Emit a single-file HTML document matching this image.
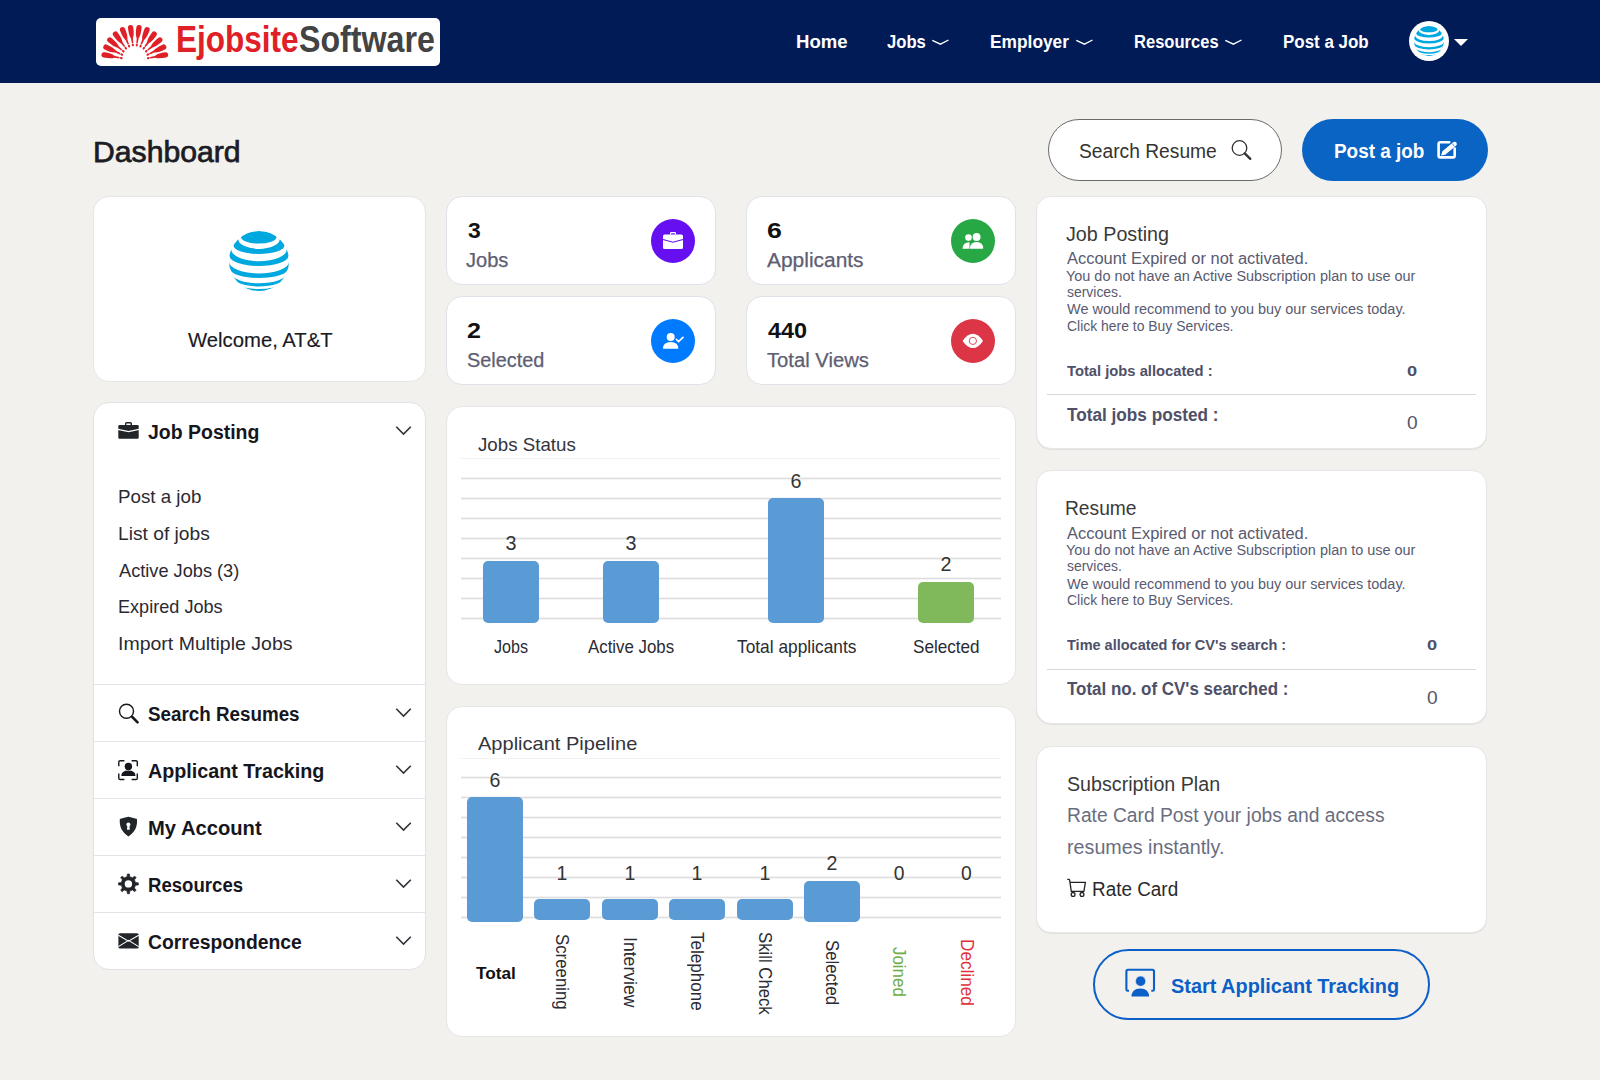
<!DOCTYPE html>
<html><head><meta charset="utf-8"><title>Dashboard</title>
<style>
*{margin:0;padding:0;box-sizing:border-box}
html,body{width:1600px;height:1080px;overflow:hidden;background:#f2f1ee;font-family:"Liberation Sans",sans-serif}
.t{position:absolute;white-space:nowrap;line-height:1}
.b{position:absolute}
.card{position:absolute;background:#fff;border:1px solid #e6e6e6;border-radius:16px}
.sc{position:absolute;background:#fff;border:1px solid #dfe2e8;border-radius:16px}
.ic{position:absolute;border-radius:50%}
.hr{position:absolute;height:1px;background:#dcdcdc}
.grid{position:absolute;height:1px;background:#dedede;box-shadow:0 1px 0 #f4f4f4,0 -1px 0 #f4f4f4}
.bar{position:absolute;background:#5b9bd5;border-radius:5px}
svg{position:absolute;overflow:visible}
</style></head>
<body>
<div class="b" style="left:0;top:0;width:1600px;height:83px;background:#011b56"></div>
<div class="b" style="left:96px;top:18px;width:344px;height:48px;background:#fff;border-radius:5px"></div>
<svg style="left:96px;top:18px" width="80" height="48" viewBox="0 0 80 48" ><g transform="translate(38.80 42.70) rotate(-10.80) translate(-1.71 0)"><path d="M17.4 -0.7 L22.2 -0.95 C25.2 -2.55 29 -2.65 33 -2.65 A2.65 2.65 0 0 1 33 2.65 C29 2.65 25.2 2.55 22.2 0.95 L17.4 0.7Z" fill="#e02027"/><ellipse cx="15.5" cy="0" rx="1.5" ry="1.05" fill="#e02027"/></g><g transform="translate(38.80 42.70) rotate(-25.20) translate(-1.09 0)"><path d="M17.4 -0.7 L22.2 -0.95 C25.2 -2.55 29 -2.65 33 -2.65 A2.65 2.65 0 0 1 33 2.65 C29 2.65 25.2 2.55 22.2 0.95 L17.4 0.7Z" fill="#e02027"/><ellipse cx="15.5" cy="0" rx="1.5" ry="1.05" fill="#e02027"/></g><g transform="translate(38.80 42.70) rotate(-39.60) translate(-0.54 0)"><path d="M17.4 -0.7 L22.2 -0.95 C25.2 -2.55 29 -2.65 33 -2.65 A2.65 2.65 0 0 1 33 2.65 C29 2.65 25.2 2.55 22.2 0.95 L17.4 0.7Z" fill="#e02027"/><ellipse cx="15.5" cy="0" rx="1.5" ry="1.05" fill="#e02027"/></g><g transform="translate(38.80 42.70) rotate(-54.00) translate(-0.10 0)"><path d="M17.4 -0.7 L22.2 -0.95 C25.2 -2.55 29 -2.65 33 -2.65 A2.65 2.65 0 0 1 33 2.65 C29 2.65 25.2 2.55 22.2 0.95 L17.4 0.7Z" fill="#e02027"/><ellipse cx="15.5" cy="0" rx="1.5" ry="1.05" fill="#e02027"/></g><g transform="translate(38.80 42.70) rotate(-68.40) translate(0.22 0)"><path d="M17.4 -0.7 L22.2 -0.95 C25.2 -2.55 29 -2.65 33 -2.65 A2.65 2.65 0 0 1 33 2.65 C29 2.65 25.2 2.55 22.2 0.95 L17.4 0.7Z" fill="#e02027"/><ellipse cx="15.5" cy="0" rx="1.5" ry="1.05" fill="#e02027"/></g><g transform="translate(38.80 42.70) rotate(-82.80) translate(0.38 0)"><path d="M17.4 -0.7 L22.2 -0.95 C25.2 -2.55 29 -2.65 33 -2.65 A2.65 2.65 0 0 1 33 2.65 C29 2.65 25.2 2.55 22.2 0.95 L17.4 0.7Z" fill="#e02027"/><ellipse cx="15.5" cy="0" rx="1.5" ry="1.05" fill="#e02027"/></g><g transform="translate(38.80 42.70) rotate(-97.20) translate(0.38 0)"><path d="M17.4 -0.7 L22.2 -0.95 C25.2 -2.55 29 -2.65 33 -2.65 A2.65 2.65 0 0 1 33 2.65 C29 2.65 25.2 2.55 22.2 0.95 L17.4 0.7Z" fill="#e02027"/><ellipse cx="15.5" cy="0" rx="1.5" ry="1.05" fill="#e02027"/></g><g transform="translate(38.80 42.70) rotate(-111.60) translate(0.22 0)"><path d="M17.4 -0.7 L22.2 -0.95 C25.2 -2.55 29 -2.65 33 -2.65 A2.65 2.65 0 0 1 33 2.65 C29 2.65 25.2 2.55 22.2 0.95 L17.4 0.7Z" fill="#e02027"/><ellipse cx="15.5" cy="0" rx="1.5" ry="1.05" fill="#e02027"/></g><g transform="translate(38.80 42.70) rotate(-126.00) translate(-0.10 0)"><path d="M17.4 -0.7 L22.2 -0.95 C25.2 -2.55 29 -2.65 33 -2.65 A2.65 2.65 0 0 1 33 2.65 C29 2.65 25.2 2.55 22.2 0.95 L17.4 0.7Z" fill="#e02027"/><ellipse cx="15.5" cy="0" rx="1.5" ry="1.05" fill="#e02027"/></g><g transform="translate(38.80 42.70) rotate(-140.40) translate(-0.54 0)"><path d="M17.4 -0.7 L22.2 -0.95 C25.2 -2.55 29 -2.65 33 -2.65 A2.65 2.65 0 0 1 33 2.65 C29 2.65 25.2 2.55 22.2 0.95 L17.4 0.7Z" fill="#e02027"/><ellipse cx="15.5" cy="0" rx="1.5" ry="1.05" fill="#e02027"/></g><g transform="translate(38.80 42.70) rotate(-154.80) translate(-1.09 0)"><path d="M17.4 -0.7 L22.2 -0.95 C25.2 -2.55 29 -2.65 33 -2.65 A2.65 2.65 0 0 1 33 2.65 C29 2.65 25.2 2.55 22.2 0.95 L17.4 0.7Z" fill="#e02027"/><ellipse cx="15.5" cy="0" rx="1.5" ry="1.05" fill="#e02027"/></g><g transform="translate(38.80 42.70) rotate(-169.20) translate(-1.71 0)"><path d="M17.4 -0.7 L22.2 -0.95 C25.2 -2.55 29 -2.65 33 -2.65 A2.65 2.65 0 0 1 33 2.65 C29 2.65 25.2 2.55 22.2 0.95 L17.4 0.7Z" fill="#e02027"/><ellipse cx="15.5" cy="0" rx="1.5" ry="1.05" fill="#e02027"/></g></svg>
<div class="t" style="left:176.25px;top:22.00px;font-size:36px;font-weight:700;color:#e02027;transform:scale(0.8759,1.0);transform-origin:0 30.00px;">Ejobsite</div>
<div class="t" style="left:299.11px;top:22.00px;font-size:36px;font-weight:700;color:#434343;transform:scale(0.8933,1.0);transform-origin:0 30.00px;">Software</div>
<div class="t" style="left:796.47px;top:33.00px;font-size:18px;font-weight:700;color:#fff;transform:scale(1.0312,1.0);transform-origin:0 15.00px;">Home</div>
<div class="t" style="left:887.08px;top:33.00px;font-size:18px;font-weight:700;color:#fff;transform:scale(0.9250,1.0);transform-origin:0 15.00px;">Jobs</div>
<div class="t" style="left:989.84px;top:33.00px;font-size:18px;font-weight:700;color:#fff;transform:scale(0.9630,1.0);transform-origin:0 15.00px;">Employer</div>
<div class="t" style="left:1133.88px;top:33.00px;font-size:18px;font-weight:700;color:#fff;transform:scale(0.9189,1.0);transform-origin:0 15.00px;">Resources</div>
<div class="t" style="left:1282.86px;top:33.00px;font-size:18px;font-weight:700;color:#fff;transform:scale(0.9416,1.0);transform-origin:0 15.00px;">Post a Job</div>
<svg style="left:932px;top:39px" width="17" height="7" viewBox="0 0 17 7" ><path d="M0.3 1.3 L8.4 5.2 L16.5 1.0" fill="none" stroke="#fff" stroke-width="1.35"/></svg>
<svg style="left:1076px;top:39px" width="17" height="7" viewBox="0 0 17 7" ><path d="M0.3 1.3 L8.4 5.2 L16.5 1.0" fill="none" stroke="#fff" stroke-width="1.35"/></svg>
<svg style="left:1225px;top:39px" width="17" height="7" viewBox="0 0 17 7" ><path d="M0.3 1.3 L8.4 5.2 L16.5 1.0" fill="none" stroke="#fff" stroke-width="1.35"/></svg>
<svg style="left:1409px;top:21px" width="40" height="40" viewBox="0 0 40 40" ><circle cx="20" cy="20" r="20" fill="#fff"/><g transform="translate(5 5) scale(0.5)"><defs><clipPath id="g1409_21"><circle cx="30" cy="30" r="30"/></clipPath></defs><g clip-path="url(#g1409_21)"><ellipse cx="29.8" cy="6.3" rx="17.6" ry="6.3" fill="#00a8e0"/><path d="M9.34 8.25 A20.66 9.65 0 0 0 50.66 8.25 L66 8.25 L66 14.3 L55.56 14.3 A25.56 8.70 0 0 1 4.44 14.3 L-6 14.3 L-6 8.25Z" fill="#00a8e0"/><path d="M2.29 18.5 A27.71 11.70 0 0 0 57.71 18.5 L66 18.5 L66 24.7 L59.53 24.7 A29.53 10.30 0 0 1 0.47 24.7 L-6 24.7 L-6 18.5Z" fill="#00a8e0"/><path d="M0.01 30.8 A29.99 11.70 0 0 0 59.99 30.8 L66 30.8 L66 37.5 L59.05 37.5 A29.05 9.50 0 0 1 0.95 37.5 L-6 37.5 L-6 30.8Z" fill="#00a8e0"/><path d="M3.01 43.1 A26.99 9.20 0 0 0 56.99 43.1 L66 43.1 L66 47.0 L54.72 47.0 A24.72 8.50 0 0 1 5.28 47.0 L-6 47.0 L-6 43.1Z" fill="#00a8e0"/><path d="M11.48 53.6 A18.52 4.50 0 0 0 48.52 53.6 L66 53.6 L66 55.0 L46.58 55.0 A16.58 5.80 0 0 1 13.42 55.0 L-6 55.0 L-6 53.6Z" fill="#00a8e0"/></g></g></svg>
<svg style="left:1454px;top:39px" width="14" height="8"><path d="M0 0H14L7 7Z" fill="#fff"/></svg>
<div class="t" style="left:92.81px;top:137.00px;font-size:30.3px;color:#1c1c24;transform:scale(0.9958,1.0);transform-origin:0 25.00px;-webkit-text-stroke:0.75px #1c1c24;">Dashboard</div>
<div class="b" style="left:1048px;top:119px;width:234px;height:62px;border:1px solid #6b6b6b;border-radius:31px;background:#fff"></div>
<div class="t" style="left:1078.54px;top:141.00px;font-size:20px;color:#35332f;transform:scale(0.9610,1.0);transform-origin:0 17.00px;">Search Resume</div>
<svg style="left:1231px;top:140px" width="22" height="22"><circle cx="8.5" cy="8" r="7.3" fill="none" stroke="#35332f" stroke-width="1.3"/><path d="M13.7 13.4 L19.3 18.9" stroke="#35332f" stroke-width="2.3" stroke-linecap="round"/></svg>
<div class="b" style="left:1302px;top:119px;width:186px;height:62px;border-radius:31px;background:#0a64c4"></div>
<div class="t" style="left:1334.05px;top:141.00px;font-size:20px;font-weight:700;color:#fff;transform:scale(0.9462,1.0);transform-origin:0 17.00px;">Post a job</div>
<svg style="left:1437px;top:141px" width="22" height="20" viewBox="0 0 22 20" ><path d="M12.2 1.3 H3.2 Q1.6 1.3 1.6 2.9 V14.8 Q1.6 16.4 3.2 16.4 H16.1 Q17.7 16.4 17.7 14.8 V7.6" fill="none" stroke="#fff" stroke-width="2.6" stroke-linecap="round"/><path d="M4.0 14.6 L5.4 10.3 L16.2 1.3 A2.15 2.15 0 0 1 19.0 4.7 L8.2 13.7Z" fill="#fff"/><path d="M15.0 2.4 L17.8 5.7" stroke="#0a64c4" stroke-width="0.7"/></svg>
<div class="card" style="left:93px;top:196px;width:333px;height:186px"></div>
<svg style="left:229px;top:231px" width="60" height="60" viewBox="0 0 60 60" ><g transform="scale(1.0)"><defs><clipPath id="g229_231"><circle cx="30" cy="30" r="30"/></clipPath></defs><g clip-path="url(#g229_231)"><ellipse cx="29.8" cy="6.3" rx="17.6" ry="6.3" fill="#00a8e0"/><path d="M9.34 8.25 A20.66 9.65 0 0 0 50.66 8.25 L66 8.25 L66 14.3 L55.56 14.3 A25.56 8.70 0 0 1 4.44 14.3 L-6 14.3 L-6 8.25Z" fill="#00a8e0"/><path d="M2.29 18.5 A27.71 11.70 0 0 0 57.71 18.5 L66 18.5 L66 24.7 L59.53 24.7 A29.53 10.30 0 0 1 0.47 24.7 L-6 24.7 L-6 18.5Z" fill="#00a8e0"/><path d="M0.01 30.8 A29.99 11.70 0 0 0 59.99 30.8 L66 30.8 L66 37.5 L59.05 37.5 A29.05 9.50 0 0 1 0.95 37.5 L-6 37.5 L-6 30.8Z" fill="#00a8e0"/><path d="M3.01 43.1 A26.99 9.20 0 0 0 56.99 43.1 L66 43.1 L66 47.0 L54.72 47.0 A24.72 8.50 0 0 1 5.28 47.0 L-6 47.0 L-6 43.1Z" fill="#00a8e0"/><path d="M11.48 53.6 A18.52 4.50 0 0 0 48.52 53.6 L66 53.6 L66 55.0 L46.58 55.0 A16.58 5.80 0 0 1 13.42 55.0 L-6 55.0 L-6 53.6Z" fill="#00a8e0"/></g></g></svg>
<div class="t" style="left:188.00px;top:330.00px;font-size:20.29px;color:#1a1a22;-webkit-text-stroke:0.15px #1a1a22;">Welcome, AT&amp;T</div>
<div class="sc" style="left:446px;top:196px;width:270px;height:89px"></div>
<div class="t" style="left:467.87px;top:220.00px;font-size:22.25px;font-weight:700;color:#111;transform:scale(1.0300,1.0);transform-origin:0 18.00px;">3</div>
<div class="t" style="left:466.19px;top:251.00px;font-size:19.78px;color:#5e5e72;transform:scale(1.0150,1.0);transform-origin:0 16.00px;-webkit-text-stroke:0.25px #5e5e72;">Jobs</div>
<div class="ic" style="left:651px;top:219px;width:44px;height:44px;background:#6610f2"></div>
<svg style="left:663px;top:231px" width="20" height="20" viewBox="0 0 20 20" ><path d="M7 2.2 Q7 1 8.2 1 H11.8 Q13 1 13 2.2 V3.6 H11.8 V2.3 H8.2 V3.6 H7Z" fill="#fff"/><rect x="0" y="3.6" width="20" height="14.4" rx="1.6" fill="#fff"/><path d="M0 8.5 L10 11.2 L20 8.5" fill="none" stroke="#6610f2" stroke-width="1.1"/></svg>
<div class="sc" style="left:746px;top:196px;width:270px;height:89px"></div>
<div class="t" style="left:766.70px;top:220.00px;font-size:22.25px;font-weight:700;color:#111;transform:scale(1.2000,1.0);transform-origin:0 18.00px;">6</div>
<div class="t" style="left:767.10px;top:251.00px;font-size:19.78px;color:#5e5e72;transform:scale(1.0589,1.0);transform-origin:0 16.00px;-webkit-text-stroke:0.25px #5e5e72;">Applicants</div>
<div class="ic" style="left:951px;top:219px;width:44px;height:44px;background:#28a745"></div>
<svg style="left:950px;top:218px" width="46" height="46" viewBox="0 0 46 46" ><circle cx="18.5" cy="19.6" r="3.3" fill="#fff"/><circle cx="26.6" cy="19" r="3.9" fill="#fff"/><path d="M12.5 30.7 Q12.5 24.2 19.5 24.2 L19.5 30.7Z" fill="#fff"/><path d="M20 30.7 Q20 24.1 26.6 24.1 Q33.2 24.1 33.2 30.7Z" fill="#fff"/></svg>
<div class="sc" style="left:446px;top:296px;width:270px;height:89px"></div>
<div class="t" style="left:467.12px;top:320.00px;font-size:22.25px;font-weight:700;color:#111;transform:scale(1.1250,1.0);transform-origin:0 18.00px;">2</div>
<div class="t" style="left:466.90px;top:351.00px;font-size:19.78px;color:#5e5e72;transform:scale(1.0047,1.0);transform-origin:0 16.00px;-webkit-text-stroke:0.25px #5e5e72;">Selected</div>
<div class="ic" style="left:651px;top:319px;width:44px;height:44px;background:#007bff"></div>
<svg style="left:650px;top:318px" width="46" height="46" viewBox="0 0 46 46" ><circle cx="20.7" cy="19" r="4" fill="#fff"/><path d="M13 30.7 Q13 24 20.7 24 Q28.3 24 28.3 30.7Z" fill="#fff"/><path d="M26.3 21.3 L28.5 23.6 L33 19.3" fill="none" stroke="#fff" stroke-width="1.6" stroke-linecap="round"/></svg>
<div class="sc" style="left:746px;top:296px;width:270px;height:89px"></div>
<div class="t" style="left:767.50px;top:320.00px;font-size:22.25px;font-weight:700;color:#111;transform:scale(1.0528,1.0);transform-origin:0 18.00px;">440</div>
<div class="t" style="left:767.10px;top:351.00px;font-size:19.78px;color:#5e5e72;transform:scale(1.0232,1.0);transform-origin:0 16.00px;-webkit-text-stroke:0.25px #5e5e72;">Total Views</div>
<div class="ic" style="left:951px;top:319px;width:44px;height:44px;background:#dc3545"></div>
<svg style="left:950px;top:318px" width="46" height="46" viewBox="0 0 46 46" ><path d="M12.6 22.9 Q17.5 15.8 22.9 15.8 Q28.3 15.8 33 22.9 Q28.3 30 22.9 30 Q17.5 30 12.6 22.9Z" fill="#fff"/><circle cx="22.9" cy="22.9" r="3.6" fill="none" stroke="#dc3545" stroke-width="0.9"/></svg>
<div class="card" style="left:1036px;top:196px;width:451px;height:253px;border-radius:15px;box-shadow:0 1px 1px rgba(0,0,0,0.07)"></div>
<div class="t" style="left:1066.01px;top:224.00px;font-size:20px;color:#3a3a3a;transform:scale(0.9853,1.0);transform-origin:0 17.00px;">Job Posting</div>
<div class="t" style="left:1067.00px;top:251.00px;font-size:16px;color:#585a70;transform:scale(1.0278,1.0);transform-origin:0 13.00px;">Account Expired or not activated.</div>
<div class="t" style="left:1066.47px;top:269.00px;font-size:14px;color:#585a70;transform:scale(1.0312,1.0);transform-origin:0 12.00px;">You do not have an Active Subscription plan to use our</div>
<div class="t" style="left:1066.81px;top:285.00px;font-size:14px;color:#585a70;transform:scale(0.9943,1.0);transform-origin:0 12.00px;">services.</div>
<div class="t" style="left:1066.80px;top:302.00px;font-size:14px;color:#585a70;transform:scale(1.0327,1.0);transform-origin:0 12.00px;">We would recommend to you buy our services today.</div>
<div class="t" style="left:1066.80px;top:319.00px;font-size:14px;color:#585a70;transform:scale(0.9952,1.0);transform-origin:0 12.00px;">Click here to Buy Services.</div>
<div class="t" style="left:1067.00px;top:363.00px;font-size:15px;font-weight:700;color:#4e5068;transform:scale(0.9830,1.0);transform-origin:0 13.00px;">Total jobs allocated :</div>
<div class="t" style="left:1406.79px;top:363.00px;font-size:15px;font-weight:700;color:#4e5068;transform:scale(1.2143,1.0);transform-origin:0 13.00px;">0</div>
<div class="hr" style="left:1047px;top:394px;width:429px;background:#d9d9d9"></div>
<div class="t" style="left:1067.00px;top:406.00px;font-size:18px;font-weight:700;color:#4e5068;transform:scale(0.9554,1.0);transform-origin:0 15.00px;">Total jobs posted :</div>
<div class="t" style="left:1407.44px;top:414.00px;font-size:18px;color:#55566a;transform:scale(1.0625,1.0);transform-origin:0 15.00px;">0</div>
<div class="card" style="left:1036px;top:470px;width:451px;height:254px;border-radius:15px;box-shadow:0 1px 1px rgba(0,0,0,0.07)"></div>
<div class="t" style="left:1065.08px;top:498.00px;font-size:20px;color:#3a3a3a;transform:scale(0.9606,1.0);transform-origin:0 17.00px;">Resume</div>
<div class="t" style="left:1067.00px;top:526.00px;font-size:16px;color:#585a70;transform:scale(1.0278,1.0);transform-origin:0 13.00px;">Account Expired or not activated.</div>
<div class="t" style="left:1066.47px;top:543.00px;font-size:14px;color:#585a70;transform:scale(1.0312,1.0);transform-origin:0 12.00px;">You do not have an Active Subscription plan to use our</div>
<div class="t" style="left:1066.81px;top:559.00px;font-size:14px;color:#585a70;transform:scale(0.9943,1.0);transform-origin:0 12.00px;">services.</div>
<div class="t" style="left:1066.80px;top:577.00px;font-size:14px;color:#585a70;transform:scale(1.0327,1.0);transform-origin:0 12.00px;">We would recommend to you buy our services today.</div>
<div class="t" style="left:1066.80px;top:593.00px;font-size:14px;color:#585a70;transform:scale(0.9952,1.0);transform-origin:0 12.00px;">Click here to Buy Services.</div>
<div class="t" style="left:1067.00px;top:637.00px;font-size:15px;font-weight:700;color:#4e5068;transform:scale(0.9668,1.0);transform-origin:0 13.00px;">Time allocated for CV&#x27;s search :</div>
<div class="t" style="left:1426.79px;top:637.00px;font-size:15px;font-weight:700;color:#4e5068;transform:scale(1.2143,1.0);transform-origin:0 13.00px;">0</div>
<div class="hr" style="left:1047px;top:669px;width:429px;background:#d9d9d9"></div>
<div class="t" style="left:1067.00px;top:680.00px;font-size:18px;font-weight:700;color:#4e5068;transform:scale(0.9421,1.0);transform-origin:0 15.00px;">Total no. of CV&#x27;s searched :</div>
<div class="t" style="left:1427.44px;top:689.00px;font-size:18px;color:#55566a;transform:scale(1.0625,1.0);transform-origin:0 15.00px;">0</div>
<div class="card" style="left:1036px;top:746px;width:451px;height:187px;border-radius:15px;box-shadow:0 1px 1px rgba(0,0,0,0.07)"></div>
<div class="t" style="left:1067.02px;top:774.00px;font-size:20px;color:#3a3a3a;transform:scale(0.9838,1.0);transform-origin:0 17.00px;">Subscription Plan</div>
<div class="t" style="left:1066.58px;top:805.00px;font-size:20px;color:#6a6d80;transform:scale(0.9618,1.0);transform-origin:0 17.00px;">Rate Card Post your jobs and access</div>
<div class="t" style="left:1067.31px;top:837.00px;font-size:20px;color:#6a6d80;transform:scale(0.9854,1.0);transform-origin:0 17.00px;">resumes instantly.</div>
<svg style="left:1066px;top:878px" width="22" height="22" viewBox="0 0 22 22" ><path d="M1.3 1.4 H2.7 Q3.5 1.4 3.7 2.3 L5.3 13.3 H17.9 L19.4 4.3 H4.2" fill="none" stroke="#222" stroke-width="1.3" stroke-linejoin="round"/><circle cx="7.1" cy="16.4" r="1.9" fill="none" stroke="#222" stroke-width="1.3"/><circle cx="16" cy="16.4" r="1.9" fill="none" stroke="#222" stroke-width="1.3"/></svg>
<div class="t" style="left:1092.41px;top:879.00px;font-size:20px;color:#2a2a2a;transform:scale(0.9455,1.0);transform-origin:0 17.00px;">Rate Card</div>
<div class="b" style="left:1093px;top:949px;width:337px;height:71px;border:2.5px solid #0b5fc6;border-radius:36px"></div>
<svg style="left:1125px;top:968px" width="32" height="31" viewBox="0 0 32 31" ><path d="M4 22.8 H2.7 Q1.4 22.8 1.4 21.5 V3.3 Q1.4 1.8 2.9 1.8 H27.4 Q29 1.8 29 3.3 V21.5 Q29 22.8 27.7 22.8 H26.3" fill="none" stroke="#0b5fc6" stroke-width="2.1"/><circle cx="15.6" cy="13.2" r="5.1" fill="#0b5fc6" stroke="#f2f1ee" stroke-width="0.6"/><path d="M5.6 29.4 Q5.6 19.6 15.3 19.6 Q25 19.6 25 29.4Z" fill="#0b5fc6" stroke="#f2f1ee" stroke-width="1.6"/></svg>
<div class="t" style="left:1171.05px;top:975.00px;font-size:21px;font-weight:700;color:#0b5fc6;transform:scale(0.9475,1.0);transform-origin:0 18.00px;">Start Applicant Tracking</div>
<div class="card" style="left:93px;top:402px;width:333px;height:568px;border-color:#e2e2e6"></div>
<svg style="left:118px;top:422px" width="21" height="18" viewBox="0 0 21 18" ><path d="M7 1.5 Q7 0 8.5 0 H12.5 Q14 0 14 1.5 V3.2 H12.6 V1.4 H8.4 V3.2 H7Z" fill="#212529"/><rect x="0.3" y="3" width="20.4" height="13.8" rx="1.3" fill="#212529"/><path d="M0 7.4 L10.5 9.6 L21 7.4" fill="none" stroke="#fff" stroke-width="1.2"/></svg>
<div class="t" style="left:148.03px;top:422.00px;font-size:20px;font-weight:700;color:#16161e;transform:scale(0.9732,1.0);transform-origin:0 17.00px;">Job Posting</div>
<svg style="left:395px;top:426px" width="17" height="10" viewBox="0 0 17 10" ><path d="M1.3 0.8 L8.5 8.0 L15.8 0.7" fill="none" stroke="#2f3237" stroke-width="1.6"/></svg>
<div class="t" style="left:117.63px;top:487.00px;font-size:19px;color:#2a2a33;transform:scale(0.9866,1.0);transform-origin:0 16.00px;">Post a job</div>
<div class="t" style="left:117.58px;top:524.00px;font-size:19px;color:#2a2a33;transform:scale(1.0102,1.0);transform-origin:0 16.00px;">List of jobs</div>
<div class="t" style="left:118.80px;top:561.00px;font-size:19px;color:#2a2a33;transform:scale(0.9573,1.0);transform-origin:0 16.00px;">Active Jobs (3)</div>
<div class="t" style="left:117.70px;top:597.00px;font-size:19px;color:#2a2a33;transform:scale(0.9523,1.0);transform-origin:0 16.00px;">Expired Jobs</div>
<div class="t" style="left:117.55px;top:634.00px;font-size:19px;color:#2a2a33;transform:scale(1.0263,1.0);transform-origin:0 16.00px;">Import Multiple Jobs</div>
<div class="hr" style="left:94px;top:684px;width:331px;background:#e3e3ea"></div>
<div class="t" style="left:148.06px;top:704.00px;font-size:20px;font-weight:700;color:#16161e;transform:scale(0.9403,1.0);transform-origin:0 17.00px;">Search Resumes</div>
<svg style="left:117px;top:701.7px" width="24" height="24" viewBox="0 0 24 24" ><circle cx="9.5" cy="9.2" r="7.0" fill="none" stroke="#16161e" stroke-width="1.4"/><path d="M15.3 15 L20.6 20.3" stroke="#16161e" stroke-width="2.5" stroke-linecap="round"/></svg>
<svg style="left:395px;top:708px" width="17" height="10" viewBox="0 0 17 10" ><path d="M1.3 0.8 L8.5 8.0 L15.8 0.7" fill="none" stroke="#2f3237" stroke-width="1.6"/></svg>
<div class="hr" style="left:94px;top:741px;width:331px;background:#e3e3ea"></div>
<div class="t" style="left:148.01px;top:761.00px;font-size:20px;font-weight:700;color:#16161e;transform:scale(0.9859,1.0);transform-origin:0 17.00px;">Applicant Tracking</div>
<svg style="left:117px;top:759px" width="24" height="24" viewBox="0 0 24 24" ><path d="M1.8 7.3 V3 Q1.8 1.7 3.1 1.7 H7.4 M14.6 1.7 H19 Q20.3 1.7 20.3 3 V7.3 M20.3 14.6 V19.2 Q20.3 20.5 19 20.5 H14.6 M7.4 20.5 H3.1 Q1.8 20.5 1.8 19.2 V14.6" fill="none" stroke="#16161e" stroke-width="1.4"/><circle cx="11.4" cy="7.4" r="3.7" fill="#16161e"/><path d="M4.3 17 Q4.3 11.5 11.4 11.5 Q18.5 11.5 18.5 17Z" fill="#16161e"/></svg>
<svg style="left:395px;top:765px" width="17" height="10" viewBox="0 0 17 10" ><path d="M1.3 0.8 L8.5 8.0 L15.8 0.7" fill="none" stroke="#2f3237" stroke-width="1.6"/></svg>
<div class="hr" style="left:94px;top:798px;width:331px;background:#e3e3ea"></div>
<div class="t" style="left:147.99px;top:818.00px;font-size:20px;font-weight:700;color:#16161e;transform:scale(1.0090,1.0);transform-origin:0 17.00px;">My Account</div>
<svg style="left:117px;top:815.3px" width="24" height="24" viewBox="0 0 24 24" ><path d="M11.4 1.8 Q15.5 2.5 20 4 Q20.5 12 16.8 16.5 Q14.5 19.5 11.4 21.5 Q8.3 19.5 6 16.5 Q2.3 12 2.8 4 Q7.3 2.5 11.4 1.8Z" fill="#212529"/><circle cx="11.4" cy="9.6" r="2" fill="#fff"/><path d="M10.4 10 H12.4 L12.8 14.8 H10Z" fill="#fff"/></svg>
<svg style="left:395px;top:822px" width="17" height="10" viewBox="0 0 17 10" ><path d="M1.3 0.8 L8.5 8.0 L15.8 0.7" fill="none" stroke="#2f3237" stroke-width="1.6"/></svg>
<div class="hr" style="left:94px;top:855px;width:331px;background:#e3e3ea"></div>
<div class="t" style="left:148.07px;top:875.00px;font-size:20px;font-weight:700;color:#16161e;transform:scale(0.9300,1.0);transform-origin:0 17.00px;">Resources</div>
<svg style="left:117px;top:872px" width="24" height="24" viewBox="0 0 24 24" ><path d="M10.01 4.73 L10.35 1.95 L12.45 1.95 L12.79 4.73 L15.48 5.85 L17.69 4.13 L19.17 5.61 L17.45 7.82 L18.57 10.51 L21.35 10.85 L21.35 12.95 L18.57 13.29 L17.45 15.98 L19.17 18.19 L17.69 19.67 L15.48 17.95 L12.79 19.07 L12.45 21.85 L10.35 21.85 L10.01 19.07 L7.32 17.95 L5.11 19.67 L3.63 18.19 L5.35 15.98 L4.23 13.29 L1.45 12.95 L1.45 10.85 L4.23 10.51 L5.35 7.82 L3.63 5.61 L5.11 4.13 L7.32 5.85Z" fill="#212529" stroke="#212529" stroke-width="0.6" stroke-linejoin="round"/><circle cx="11.4" cy="11.9" r="3.7" fill="#fff"/></svg>
<svg style="left:395px;top:879px" width="17" height="10" viewBox="0 0 17 10" ><path d="M1.3 0.8 L8.5 8.0 L15.8 0.7" fill="none" stroke="#2f3237" stroke-width="1.6"/></svg>
<div class="hr" style="left:94px;top:912px;width:331px;background:#e3e3ea"></div>
<div class="t" style="left:148.03px;top:932.00px;font-size:20px;font-weight:700;color:#16161e;transform:scale(0.9682,1.0);transform-origin:0 17.00px;">Correspondence</div>
<svg style="left:117px;top:929px" width="24" height="24" viewBox="0 0 24 24" ><rect x="1.4" y="4.2" width="20.3" height="15.3" rx="1.6" fill="#212529"/><path d="M1.4 6.2 L11.5 12.2 L21.7 6.2 M1.4 17.6 L11.5 11.3 L21.7 17.6" fill="none" stroke="#fff" stroke-width="1.1"/></svg>
<svg style="left:395px;top:936px" width="17" height="10" viewBox="0 0 17 10" ><path d="M1.3 0.8 L8.5 8.0 L15.8 0.7" fill="none" stroke="#2f3237" stroke-width="1.6"/></svg>
<div class="card" style="left:446px;top:406px;width:570px;height:279px"></div>
<div class="t" style="left:477.50px;top:435.00px;font-size:19px;color:#34343c;transform:scale(0.9848,1.0);transform-origin:0 16.00px;">Jobs Status</div>
<div class="b" style="left:461px;top:458px;width:540px;height:1px;background:#f2f2f2"></div>
<div class="grid" style="left:461px;top:478px;width:540px"></div>
<div class="grid" style="left:461px;top:498px;width:540px"></div>
<div class="grid" style="left:461px;top:518px;width:540px"></div>
<div class="grid" style="left:461px;top:538px;width:540px"></div>
<div class="grid" style="left:461px;top:558px;width:540px"></div>
<div class="grid" style="left:461px;top:578px;width:540px"></div>
<div class="grid" style="left:461px;top:598px;width:540px"></div>
<div class="grid" style="left:461px;top:618px;width:540px"></div>
<div class="bar" style="left:483px;top:561px;width:56px;height:62px;background:#5b9bd5"></div>
<div class="t" style="left:505.50px;top:534.00px;font-size:19.72px;color:#333;">3</div>
<div class="t" style="left:494.00px;top:637.00px;font-size:19px;color:#2b2b33;transform:scale(0.8500,1.0);transform-origin:0 16.00px;">Jobs</div>
<div class="bar" style="left:603px;top:561px;width:56px;height:62px;background:#5b9bd5"></div>
<div class="t" style="left:625.50px;top:534.00px;font-size:19.72px;color:#333;">3</div>
<div class="t" style="left:588.00px;top:637.00px;font-size:19px;color:#2b2b33;transform:scale(0.8866,1.0);transform-origin:0 16.00px;">Active Jobs</div>
<div class="bar" style="left:768px;top:498px;width:56px;height:125px;background:#5b9bd5"></div>
<div class="t" style="left:790.50px;top:472.00px;font-size:19.72px;color:#333;">6</div>
<div class="t" style="left:736.75px;top:637.00px;font-size:19px;color:#2b2b33;transform:scale(0.9115,1.0);transform-origin:0 16.00px;">Total applicants</div>
<div class="bar" style="left:918px;top:582px;width:56px;height:41px;background:#7fb95b"></div>
<div class="t" style="left:940.50px;top:555.00px;font-size:19.72px;color:#333;">2</div>
<div class="t" style="left:913.10px;top:637.00px;font-size:19px;color:#2b2b33;transform:scale(0.9014,1.0);transform-origin:0 16.00px;">Selected</div>
<div class="card" style="left:446px;top:706px;width:570px;height:331px"></div>
<div class="t" style="left:477.80px;top:734.00px;font-size:19px;color:#34343c;transform:scale(1.0547,1.0);transform-origin:0 16.00px;">Applicant Pipeline</div>
<div class="b" style="left:461px;top:758px;width:540px;height:1px;background:#f2f2f2"></div>
<div class="grid" style="left:461px;top:777px;width:540px"></div>
<div class="grid" style="left:461px;top:797px;width:540px"></div>
<div class="grid" style="left:461px;top:817px;width:540px"></div>
<div class="grid" style="left:461px;top:837px;width:540px"></div>
<div class="grid" style="left:461px;top:857px;width:540px"></div>
<div class="grid" style="left:461px;top:877px;width:540px"></div>
<div class="grid" style="left:461px;top:897px;width:540px"></div>
<div class="grid" style="left:461px;top:917px;width:540px"></div>
<div class="bar" style="left:467px;top:797px;width:56px;height:125px"></div>
<div class="t" style="left:489.50px;top:771.00px;font-size:19.58px;color:#333;">6</div>
<div class="bar" style="left:534px;top:899px;width:56px;height:21px"></div>
<div class="t" style="left:556.50px;top:864.00px;font-size:19.58px;color:#333;">1</div>
<div class="bar" style="left:602px;top:899px;width:56px;height:21px"></div>
<div class="t" style="left:624.50px;top:864.00px;font-size:19.58px;color:#333;">1</div>
<div class="bar" style="left:669px;top:899px;width:56px;height:21px"></div>
<div class="t" style="left:691.50px;top:864.00px;font-size:19.58px;color:#333;">1</div>
<div class="bar" style="left:737px;top:899px;width:56px;height:21px"></div>
<div class="t" style="left:759.50px;top:864.00px;font-size:19.58px;color:#333;">1</div>
<div class="bar" style="left:804px;top:881px;width:56px;height:41px"></div>
<div class="t" style="left:826.50px;top:854.00px;font-size:19.58px;color:#333;">2</div>
<div class="t" style="left:893.70px;top:864.00px;font-size:19.3px;color:#333;">0</div>
<div class="t" style="left:961.10px;top:864.00px;font-size:19.3px;color:#333;">0</div>
<div class="t" style="left:475.50px;top:965.00px;font-size:17px;font-weight:700;color:#111;transform:scale(1.0128,1.0);transform-origin:0 14.00px;">Total</div>
<div class="b" style="left:562px;top:972px;width:0;height:0;transform:rotate(90deg);transform-origin:0 0"><div class="t" style="left:-37.58px;top:-9.79px;font-size:19px;color:#2b2b33;transform:scaleX(0.8843);transform-origin:0 0">Screening</div></div>
<div class="b" style="left:630px;top:972.6px;width:0;height:0;transform:rotate(90deg);transform-origin:0 0"><div class="t" style="left:-36.21px;top:-9.79px;font-size:19px;color:#2b2b33;transform:scaleX(0.9284);transform-origin:0 0">Interview</div></div>
<div class="b" style="left:697px;top:971.2px;width:0;height:0;transform:rotate(90deg);transform-origin:0 0"><div class="t" style="left:-39.00px;top:-9.79px;font-size:19px;color:#2b2b33;transform:scaleX(0.8966);transform-origin:0 0">Telephone</div></div>
<div class="b" style="left:765px;top:972.6px;width:0;height:0;transform:rotate(90deg);transform-origin:0 0"><div class="t" style="left:-41.38px;top:-9.79px;font-size:19px;color:#2b2b33;transform:scaleX(0.8804);transform-origin:0 0">Skill Check</div></div>
<div class="b" style="left:832px;top:972.2px;width:0;height:0;transform:rotate(90deg);transform-origin:0 0"><div class="t" style="left:-32.13px;top:-9.79px;font-size:19px;color:#2b2b33;transform:scaleX(0.8803);transform-origin:0 0">Selected</div></div>
<div class="b" style="left:899px;top:971.3px;width:0;height:0;transform:rotate(90deg);transform-origin:0 0"><div class="t" style="left:-24.00px;top:-9.79px;font-size:19px;color:#70ad47;transform:scaleX(0.8889);transform-origin:0 0">Joined</div></div>
<div class="b" style="left:967px;top:972.2px;width:0;height:0;transform:rotate(90deg);transform-origin:0 0"><div class="t" style="left:-33.46px;top:-9.79px;font-size:19px;color:#e0303a;transform:scaleX(0.9043);transform-origin:0 0">Declined</div></div>
</body></html>
